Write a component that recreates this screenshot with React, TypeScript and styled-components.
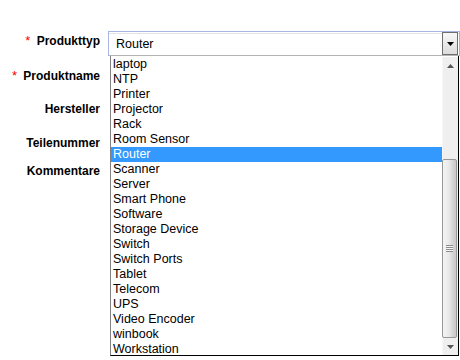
import React from 'react';
import styled, { createGlobalStyle } from 'styled-components';

const Global = createGlobalStyle`
  html, body { margin: 0; padding: 0; background: #fff; }
  body { font-family: "Liberation Sans", Arial, sans-serif; color: #000; }
  * { box-sizing: border-box; }
`;

const Form = styled.form`
  display: grid;
  grid-template-columns: 100px 352px;
  grid-template-rows: 25px 33px 33px 34px 70px;
  column-gap: 8px;
  padding-top: 31px;
  width: 460px;
  height: 360px;
  overflow: hidden;
`;

const Label = styled.label<{ $pad: number }>`
  font-size: 12px;
  font-weight: bold;
  line-height: 14px;
  text-align: right;
  white-space: nowrap;
  padding-top: ${(p) => p.$pad}px;
`;

const Req = styled.span`
  color: #f00;
  font-weight: normal;
  font-size: 13px;
  margin-right: 3px;
`;

const Cell = styled.div`
  position: relative;
`;

const TextInput = styled.input`
  display: block;
  margin: 6px 0 0 6px;
  width: 300px;
  height: 22px;
  border: 1px solid #a0a0a0;
`;

const TextArea = styled.textarea`
  display: block;
  margin: 6px 0 0 6px;
  width: 300px;
  height: 60px;
  border: 1px solid #a0a0a0;
  resize: none;
`;

const SelectBox = styled.div`
  display: flex;
  align-items: stretch;
  height: 25px;
  border: 1px solid #a8b5e5;
  border-bottom-color: #b4b4b4;
  box-shadow: inset 0 1px 0 #fff, inset 0 2px 0 #e4e4e4;
  background: #fff;
`;

const SelectValue = styled.span`
  flex: 1;
  display: flex;
  align-items: center;
  padding-left: 7px;
  padding-top: 1px;
  font-size: 12.5px;
`;

const DropButton = styled.span`
  width: 16px;
  margin-right: 1px;
  border: 1px solid #6f6f6f;
  background: linear-gradient(#f8f8f8, #dcdcdc);
  display: flex;
  align-items: center;
  justify-content: center;
`;

const ListBox = styled.div`
  position: absolute;
  top: 25px;
  left: 2px;
  width: 349px;
  height: 300px;
  padding-top: 1px;
  border-left: 1px solid #828282;
  border-right: 1px solid #000;
  border-bottom: 1px solid #000;
  background: #fff;
  display: flex;
  z-index: 5;
`;

const Options = styled.ul`
  flex: 1;
  margin: 0;
  padding: 0;
  list-style: none;
  overflow: hidden;
`;

const Option = styled.li<{ $selected?: boolean }>`
  height: 15px;
  line-height: 15px;
  padding-left: 2px;
  font-size: 12.5px;
  white-space: nowrap;
  background: ${(p) => (p.$selected ? '#3399ff' : 'transparent')};
  color: ${(p) => (p.$selected ? '#fff' : '#000')};
`;

const ScrollBar = styled.div`
  width: 16px;
  display: flex;
  flex-direction: column;
  background: #efefef;
  border-left: 1px solid #f7f7f7;
`;

const ScrollArrow = styled.div`
  height: 17px;
  display: flex;
  align-items: center;
  justify-content: center;
`;

const Track = styled.div`
  flex: 1;
  display: flex;
  flex-direction: column;
`;

const Thumb = styled.div`
  margin-top: 85px;
  height: 179px;
  width: 15px;
  margin-left: -1px;
  border: 1px solid #979797;
  border-radius: 2px;
  background: linear-gradient(to right, #f4f4f4, #e9e9e9 45%, #d2d2d2 80%, #c9c9c9);
  display: flex;
  align-items: center;
  justify-content: center;
`;

const Grip = styled.div`
  width: 7px;
  height: 7px;
  background: repeating-linear-gradient(#8c8c8c 0 1px, #f6f6f6 1px 2px);
`;

const items = [
  'laptop', 'NTP', 'Printer', 'Projector', 'Rack', 'Room Sensor', 'Router',
  'Scanner', 'Server', 'Smart Phone', 'Software', 'Storage Device', 'Switch',
  'Switch Ports', 'Tablet', 'Telecom', 'UPS', 'Video Encoder', 'winbook', 'Workstation',
];

const selected = 'Router';

const Down = ({ color }: { color: string }) => (
  <svg width="7" height="4" viewBox="0 0 7 4">
    <polygon points="0,0 7,0 3.5,4" fill={color} />
  </svg>
);

const Up = ({ color }: { color: string }) => (
  <svg width="7" height="4" viewBox="0 0 7 4">
    <polygon points="3.5,0 7,4 0,4" fill={color} />
  </svg>
);

export default function App() {
  return (
    <>
      <Global />
      <Form onSubmit={(e) => e.preventDefault()}>
        <Label $pad={3}>
          <Req>*</Req> Produkttyp
        </Label>
        <Cell>
          <SelectBox>
            <SelectValue>{selected}</SelectValue>
            <DropButton>
              <Down color="#000" />
            </DropButton>
          </SelectBox>
          <ListBox>
            <Options>
              {items.map((it) => (
                <Option key={it} $selected={it === selected}>
                  {it}
                </Option>
              ))}
            </Options>
            <ScrollBar>
              <ScrollArrow>
                <Up color="#555" />
              </ScrollArrow>
              <Track>
                <Thumb>
                  <Grip />
                </Thumb>
              </Track>
              <ScrollArrow>
                <Down color="#555" />
              </ScrollArrow>
            </ScrollBar>
          </ListBox>
        </Cell>

        <Label $pad={13}>
          <Req>*</Req> Produktname
        </Label>
        <Cell>
          <TextInput />
        </Cell>

        <Label $pad={13}>Hersteller</Label>
        <Cell>
          <TextInput />
        </Cell>

        <Label $pad={14}>Teilenummer</Label>
        <Cell>
          <TextInput />
        </Cell>

        <Label $pad={8}>Kommentare</Label>
        <Cell>
          <TextArea />
        </Cell>
      </Form>
    </>
  );
}
